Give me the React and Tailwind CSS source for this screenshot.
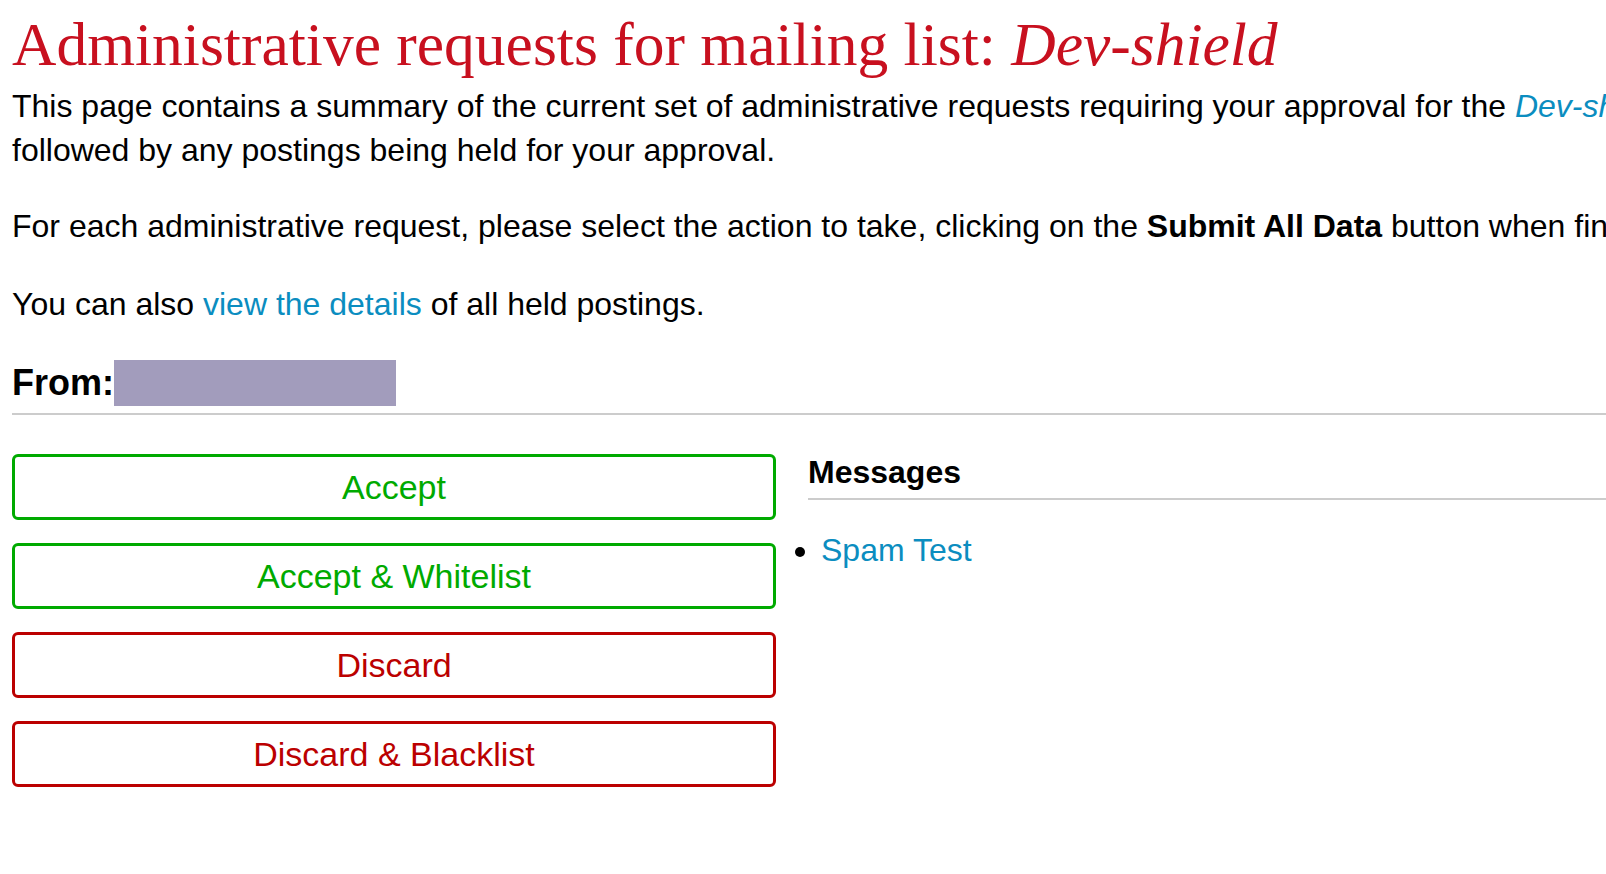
export default function App() {
  const sans = { fontFamily: '"Liberation Sans", Arial, sans-serif' };
  const acciones = [
    { texto: 'Accept', tono: 'verde' },
    { texto: 'Accept & Whitelist', tono: 'verde' },
    { texto: 'Discard', tono: 'rojo' },
    { texto: 'Discard & Blacklist', tono: 'rojo' },
  ];

  return (
    <div className="w-screen min-h-screen overflow-hidden bg-white text-black pl-3" style={sans}>
      <h1 className="font-['Liberation_Serif',serif] text-[61.5px] leading-[74px] text-[#c8101f] whitespace-nowrap mt-[7px]">
        Administrative requests for mailing list: <i>Dev-shield</i>
      </h1>

      <p className="mt-[3px] text-[32px] leading-[44px] whitespace-nowrap">
        This page contains a summary of the current set of administrative requests requiring your approval for the{' '}
        <a href="#" className="italic text-[#0b8dc0]">Dev-shield</a> mailing list, the
        <br />
        followed by any postings being held for your approval.
      </p>

      <p className="mt-8 text-[32px] leading-[44px] whitespace-nowrap">
        For each administrative request, please select the action to take, clicking on the <b>Submit All Data</b> button when finished.
      </p>

      <p className="mt-[34px] text-[32px] leading-[44px] whitespace-nowrap">
        You can also <a href="#" className="text-[#0b8dc0]">view the details</a> of all held postings.
      </p>

      <div className="mt-[34px] pb-[7px] border-b-2 border-[#cccccc] flex items-center">
        <span className="text-[36px] leading-[46px] font-bold">From:</span>
        <span className="h-[46px] w-[282px] bg-[#a29cbc]"></span>
      </div>

      <div className="mt-[39px] grid grid-cols-[764px_1fr] gap-8">
        <div className="flex flex-col gap-[23px]">
          {acciones.map((a) => (
            <button
              key={a.texto}
              className={`h-[66px] w-full rounded-[6px] border-[3px] bg-white flex items-center justify-center text-[34px] ${
                a.tono === 'verde' ? 'border-[#00aa00] text-[#00aa00]' : 'border-[#bb0000] text-[#bb0000]'
              }`}
            >
              {a.texto}
            </button>
          ))}
        </div>

        <div>
          <h3 className="text-[32px] leading-[36px] font-bold pb-2 border-b-2 border-[#cccccc] whitespace-nowrap">Messages</h3>
          <ul className="mt-[28px] list-disc pl-[13px] text-[32px] leading-[44px]">
            <li>
              <a href="#" className="text-[#0b8dc0]">Spam Test</a>
            </li>
          </ul>
        </div>
      </div>
    </div>
  );
}
